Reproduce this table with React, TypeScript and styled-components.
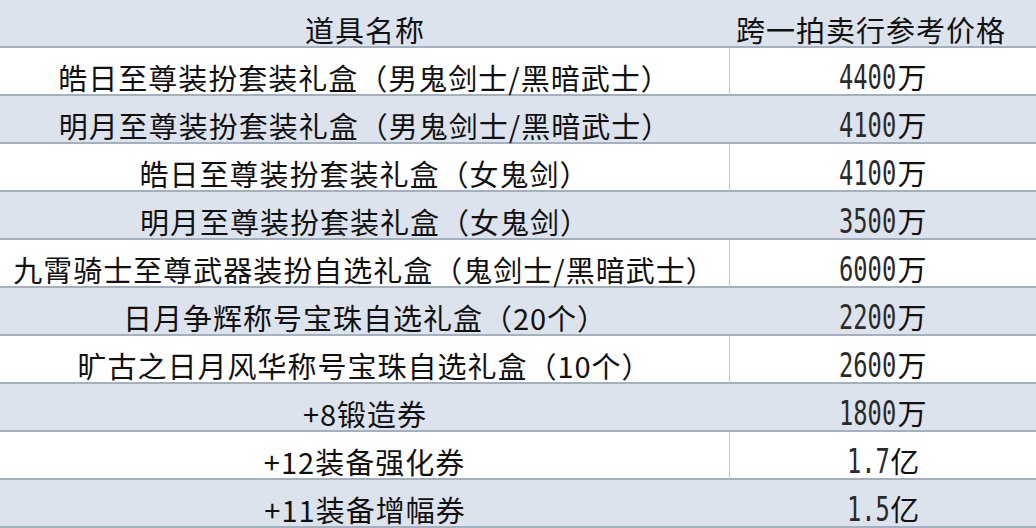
import React from 'react';
import styled, { createGlobalStyle } from 'styled-components';

const GlobalStyle = createGlobalStyle`
  html, body {
    margin: 0;
    padding: 0;
    background: #ffffff;
  }
  body {
    font-family: "Noto Sans CJK SC", "Noto Sans", sans-serif;
    color: #111111;
  }
`;

// Sheet layout
const Sheet = styled.div`
  width: 1036px;
  height: 528px;
  overflow: hidden;
  display: grid;
  grid-template-columns: 730px 1fr;
  grid-auto-rows: 48px;
`;

const Cell = styled.div<{ $shaded: boolean; $divider?: boolean; $shift?: number }>`
  box-sizing: border-box;
  display: flex;
  align-items: center;
  justify-content: center;
  padding-top: 12px;
  padding-right: ${(p) => p.$shift ?? 0}px;
  background: ${(p) => (p.$shaded ? '#dce3ed' : '#ffffff')};
  border-bottom: 2px solid #a2b0c0;
  border-right: ${(p) => (p.$divider ? '1px solid #c9c9c9' : 'none')};
  white-space: nowrap;
`;

const NameText = styled.span`
  font-size: 29px;
  line-height: 1;
  letter-spacing: 1px;
`;

const Price = styled.span`
  display: inline-flex;
  align-items: baseline;
  line-height: 1;
`;

// narrow tall digits, one fixed slot per character
const Digits = styled.span<{ $chars: number }>`
  display: inline-block;
  width: ${(p) => p.$chars * 14.5}px;
  font-family: "DejaVu Sans Mono", monospace;
  font-size: 33px;
  color: #2a2a2a;
`;

const DigitsInner = styled.span`
  display: inline-block;
  transform: scaleX(0.72);
  transform-origin: left center;
`;

const Unit = styled.span`
  font-family: "Noto Sans CJK SC", sans-serif;
  font-size: 29px;
`;

const items = [
  { name: '皓日至尊装扮套装礼盒（男鬼剑士/黑暗武士）', price: '4400', unit: '万' },
  { name: '明月至尊装扮套装礼盒（男鬼剑士/黑暗武士）', price: '4100', unit: '万' },
  { name: '皓日至尊装扮套装礼盒（女鬼剑）', price: '4100', unit: '万' },
  { name: '明月至尊装扮套装礼盒（女鬼剑）', price: '3500', unit: '万' },
  { name: '九霄骑士至尊武器装扮自选礼盒（鬼剑士/黑暗武士）', price: '6000', unit: '万' },
  { name: '日月争辉称号宝珠自选礼盒（20个）', price: '2200', unit: '万' },
  { name: '旷古之日月风华称号宝珠自选礼盒（10个）', price: '2600', unit: '万' },
  { name: '+8锻造券', price: '1800', unit: '万' },
  { name: '+12装备强化券', price: '1.7', unit: '亿' },
  { name: '+11装备增幅券', price: '1.5', unit: '亿' },
];

const App = () => {
  return (
    <>
      <GlobalStyle />
      <Sheet>
        <Cell $shaded>
          <NameText>道具名称</NameText>
        </Cell>
        <Cell $shaded $shift={24}>
          <NameText>跨一拍卖行参考价格</NameText>
        </Cell>
        {items.map((item, i) => {
          const shaded = i % 2 === 1;
          return (
            <React.Fragment key={item.name}>
              <Cell $shaded={shaded} $divider={!shaded}>
                <NameText>{item.name}</NameText>
              </Cell>
              <Cell $shaded={shaded}>
                <Price>
                  <Digits $chars={item.price.length}>
                    <DigitsInner>{item.price}</DigitsInner>
                  </Digits>
                  <Unit>{item.unit}</Unit>
                </Price>
              </Cell>
            </React.Fragment>
          );
        })}
      </Sheet>
    </>
  );
};

export default App;
